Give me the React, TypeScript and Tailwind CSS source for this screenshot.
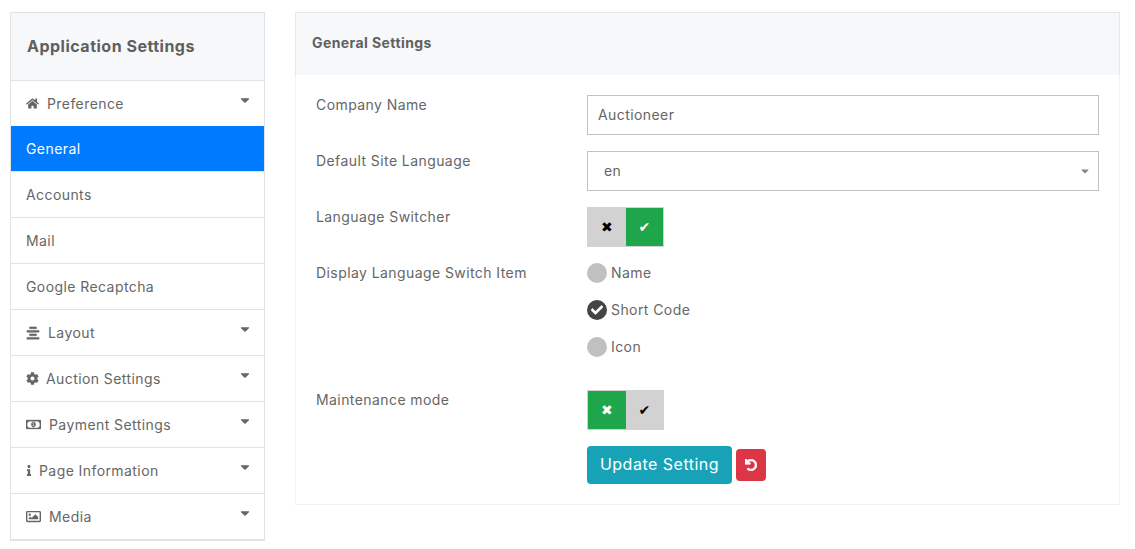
import type { ReactNode } from 'react'
import {
  FaAlignCenter,
  FaCaretDown,
  FaCheck,
  FaCog,
  FaHome,
  FaInfo,
  FaRegImage,
  FaRegMoneyBillAlt,
  FaUndo,
} from 'react-icons/fa'

const MENU: { label: string; icon?: ReactNode; gap?: string; active?: boolean; caret?: boolean }[] = [
  { label: 'Preference', icon: <FaHome className="h-[13px] w-[13px]" />, gap: 'gap-[8px]', caret: true },
  { label: 'General', active: true },
  { label: 'Accounts' },
  { label: 'Mail' },
  { label: 'Google Recaptcha' },
  { label: 'Layout', icon: <FaAlignCenter className="h-[14px] w-[14px] stroke-current stroke-[20]" />, gap: 'gap-[8px]', caret: true },
  { label: 'Auction Settings', icon: <FaCog className="h-[13px] w-[13px]" />, gap: 'gap-[7px]', caret: true },
  { label: 'Payment Settings', icon: <FaRegMoneyBillAlt className="h-[15px] w-[15px] stroke-current stroke-[15]" />, gap: 'gap-[8px]', caret: true },
  { label: 'Page Information', icon: <FaInfo className="h-[11px] w-[6px]" />, gap: 'gap-[7px]', caret: true },
  { label: 'Media', icon: <FaRegImage className="h-[15px] w-[15px]" />, gap: 'gap-[8px]', caret: true },
]

function Sidebar() {
  return (
    <aside className="w-[255px] shrink-0 border border-[#dfe2e6] border-b-2">
      <div className="flex h-[68px] items-center border-b border-[#dfe2e6] bg-[#f7f8fa] px-4 pb-[2px]">
        <h1 className="text-[16px] font-bold tracking-[0.5px] text-[#5f5f5f]">Application Settings</h1>
      </div>
      {MENU.map((item, i) => (
        <div
          key={item.label}
          className={
            item.active
              ? 'flex h-[46px] items-center border-b border-[#dfe2e6] bg-[#007bff] bg-clip-padding px-[15px] text-white'
              : `relative flex items-center px-[15px] text-[#666] ${
                  i === 0 || i === MENU.length - 1 ? 'h-[45px]' : 'h-[46px] border-b border-[#dfe2e6]'
                }`
          }
        >
          <span className={`flex items-center ${item.gap ?? ''}`}>
            {item.icon}
            {item.label}
          </span>
          {item.caret && <FaCaretDown className="absolute right-[14px] top-[12px] h-[14px] w-[10px] text-[#666]" />}
        </div>
      ))}
    </aside>
  )
}

function Toggle({ on }: { on: boolean }) {
  const glyph = 'text-[14px] leading-none'
  return (
    <div className="flex h-10 w-[77px] border border-[#d2d2d2] bg-[#d2d2d2]" style={{ fontFamily: '"DejaVu Sans", sans-serif' }}>
      <div className={`flex w-[38px] items-center justify-center ${on ? 'text-black' : 'bg-[#1fa54a] text-white'}`}>
        <span className={glyph}>✖</span>
      </div>
      <div className={`flex flex-1 items-center justify-center ${on ? 'bg-[#1fa54a] text-white' : 'text-black'}`}>
        <span className={glyph}>✔</span>
      </div>
    </div>
  )
}

function Radio({ label, checked }: { label: string; checked?: boolean }) {
  return (
    <div className="flex h-5 items-center gap-[4px]">
      {checked ? (
        <span className="flex h-5 w-5 items-center justify-center rounded-full bg-[#444]">
          <FaCheck className="h-[12px] w-[12px] stroke-white stroke-[20] text-white" />
        </span>
      ) : (
        <span className="h-5 w-5 rounded-full bg-[#c0c0c0]" />
      )}
      <span className="mb-[2px] text-[#666]">{label}</span>
    </div>
  )
}

function Row({ label, className, children }: { label: string; className?: string; children: ReactNode }) {
  return (
    <div className={`flex ${className ?? 'mb-4'}`}>
      <label className="w-[271px] shrink-0 leading-[20px] text-[#666]">{label}</label>
      <div className="flex-1">{children}</div>
    </div>
  )
}

export default function App() {
  return (
    <div
      className="flex min-h-[549px] items-start gap-[30px] bg-white pb-2 pl-[10px] pr-[15px] pt-3 text-[14px] tracking-[0.42px]"
      style={{ fontFamily: 'Inter, sans-serif' }}
    >
      <Sidebar />
      <main className="h-[493px] flex-1 border border-[#f1f2f4]">
        <div className="-m-px flex h-[63px] items-center border border-[#e4e6e9] border-b-0 bg-[#f7f8fa] px-[16px] pb-[4px]">
          <h2 className="text-[14px] font-bold text-[#5f5f5f]">General Settings</h2>
        </div>
        <div className="pl-5 pr-5 pt-[21px]">
          <Row label="Company Name">
            <input
              readOnly
              value="Auctioneer"
              className="h-10 w-full border border-[#c2c2c2] px-[10px] pb-[2px] tracking-[0.42px] text-[#666] outline-none"
            />
          </Row>
          <Row label="Default Site Language">
            <div className="relative flex h-10 items-center border border-[#c2c2c2] pb-[2px] pl-4 text-[#666]">
              en
              <FaCaretDown className="absolute right-[8px] top-[13px] h-[12px] w-[10px] text-[#888]" />
            </div>
          </Row>
          <Row label="Language Switcher">
            <Toggle on />
          </Row>
          <Row label="Display Language Switch Item" className="mb-[33px]">
            <div className="flex flex-col gap-[17px]">
              <Radio label="Name" />
              <Radio label="Short Code" checked />
              <Radio label="Icon" />
            </div>
          </Row>
          <Row label="Maintenance mode">
            <Toggle on={false} />
          </Row>
          <div className="ml-[271px] flex items-center gap-1">
            <button className="h-[38px] w-[145px] rounded bg-[#17a2b8] pb-[2px] text-[16px] tracking-[0.5px] text-white">Update Setting</button>
            <button className="flex h-8 w-[30px] items-center justify-center rounded bg-[#dc3545] text-white">
              <FaUndo className="h-3 w-3 stroke-white stroke-[30]" />
            </button>
          </div>
        </div>
      </main>
    </div>
  )
}
